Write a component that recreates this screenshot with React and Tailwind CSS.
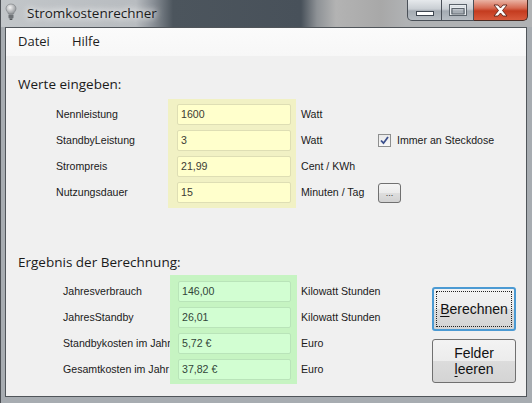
import React from "react";

const inputRows = [
  { label: "Nennleistung", value: "1600", unit: "Watt" },
  { label: "StandbyLeistung", value: "3", unit: "Watt" },
  { label: "Strompreis", value: "21,99", unit: "Cent / KWh" },
  { label: "Nutzungsdauer", value: "15", unit: "Minuten / Tag" },
];

const resultRows = [
  { label: "Jahresverbrauch", value: "146,00", unit: "Kilowatt Stunden" },
  { label: "JahresStandby", value: "26,01", unit: "Kilowatt Stunden" },
  { label: "Standbykosten im Jahr", value: "5,72 €", unit: "Euro" },
  { label: "Gesamtkosten im Jahr", value: "37,82 €", unit: "Euro" },
];

function Bulb() {
  return (
    <svg width="12" height="18" viewBox="0 0 12 18">
      <defs>
        <radialGradient id="bg1" cx="0.4" cy="0.35" r="0.7">
          <stop offset="0" stopColor="#f4f4f4" />
          <stop offset="1" stopColor="#8a8e92" />
        </radialGradient>
      </defs>
      <path d="M6 1 C2.5 1 1 3.5 1 5.5 C1 7.8 3 9 3.5 11 L8.5 11 C9 9 11 7.8 11 5.5 C11 3.5 9.5 1 6 1 Z" fill="url(#bg1)" stroke="#7a7e82" strokeWidth="0.6" />
      <rect x="3.5" y="11.5" width="5" height="4" rx="1" fill="#6d7175" />
      <rect x="4.5" y="15.5" width="3" height="1.5" rx="0.7" fill="#55595d" />
    </svg>
  );
}

function Minimize() {
  return (
    <svg width="18" height="6" viewBox="0 0 18 6">
      <rect x="0.5" y="0.5" width="17" height="4" fill="#ffffff" stroke="#3e4650" strokeWidth="1" />
    </svg>
  );
}

function Maximize() {
  return (
    <svg width="18" height="12" viewBox="0 0 18 12">
      <rect x="0.5" y="0.5" width="17" height="11" fill="none" stroke="#5b636b" strokeWidth="1" />
      <rect x="1.5" y="1.5" width="15" height="9" fill="none" stroke="#e8ecef" strokeWidth="1" />
      <rect x="2.5" y="2.5" width="13" height="2" fill="#e8ecef" />
      <rect x="3" y="4.5" width="12" height="5.5" fill="none" stroke="#5b636b" strokeWidth="1" />
    </svg>
  );
}

function CloseX() {
  return (
    <svg width="17" height="13" viewBox="0 0 17 13">
      <path d="M2 1 L6 1 L8.5 4 L11 1 L15 1 L10.5 6.5 L15 12 L11 12 L8.5 9 L6 12 L2 12 L6.5 6.5 Z" fill="#ffffff" stroke="#5a2318" strokeWidth="0.9" strokeLinejoin="round" />
    </svg>
  );
}

function Check() {
  return (
    <svg width="9" height="9" viewBox="0 0 9 9">
      <path d="M1 4.5 L3.5 7.2 L8 1" fill="none" stroke="#3b4f8c" strokeWidth="1.8" />
    </svg>
  );
}

export default function App() {
  const ui = { fontFamily: '"Open Sans", "Noto Sans", sans-serif' };
  const sans = { fontFamily: '"Liberation Sans", Arial, sans-serif' };
  return (
    <div className="w-[532px] h-[403px] overflow-hidden flex flex-col bg-[#a7acb1] border-l border-[#4c5055]">
      {/* Title bar */}
      <div className="h-[27px] flex items-start shrink-0 bg-[linear-gradient(90deg,#c2c6c9_0px,#b8bcc0_135px,#8a9097_152px,#4c555d_172px,#48515a_300px,#8e9296_316px,#b3b3b3_335px,#a8a8a8_380px,#b0b2b4_405px)]">
        <div className="ml-[4px] mt-[3px]">
          <Bulb />
        </div>
        <div
          className="ml-[10px] mt-[4px] text-[13.5px] leading-[18px] text-[#1c1c1c] [text-shadow:0_0_6px_#ffffff,0_0_10px_#ffffff]"
          style={ui}
        >
          Stromkostenrechner
        </div>
        <div className="ml-auto mr-[4px] flex">
          <div className="w-[35px] h-[21px] flex items-center justify-center pt-[7px] border border-t-0 border-[#4a5058] rounded-bl-[5px] bg-[linear-gradient(180deg,#e6e9ec_0%,#c9ced3_45%,#a4abb2_55%,#b7bdc3_100%)]">
            <Minimize />
          </div>
          <div className="w-[32px] h-[21px] flex items-center justify-center border-b border-r border-[#4a5058] bg-[linear-gradient(180deg,#e6e9ec_0%,#c9ced3_45%,#a4abb2_55%,#b7bdc3_100%)]">
            <Maximize />
          </div>
          <div className="w-[54px] h-[21px] flex items-center justify-center border-b border-r border-[#4a2a22] rounded-br-[5px] bg-[linear-gradient(180deg,#eab3a4_0%,#d66a52_40%,#c43b1f_55%,#d85a3c_100%)]">
            <CloseX />
          </div>
        </div>
      </div>
      {/* Client area */}
      <div className="flex-1 mr-[5px] mb-[6px] ml-[4px] border border-[#50555a] bg-[#f0f0f0] flex flex-col">
        <div className="h-[28px] shrink-0 flex items-center pl-[12px] bg-[linear-gradient(180deg,#fbfbfb_0%,#f7f7f7_100%)] text-[13px] text-[#1e1e1e]" style={ui}>
          <span>Datei</span>
          <span className="ml-[22px]">Hilfe</span>
        </div>

        <div className="flex flex-col text-[10.6px] text-[#1a1a1a]" style={sans}>
          <div className="mt-[19px] ml-[12px] text-[13.5px] leading-[18px] text-[#1a1a1a]" style={ui}>
            Werte eingeben:
          </div>
          <div className="mt-[6px] flex pl-[50px]">
            <div className="w-[112px] pt-[5px] flex flex-col gap-[5px]">
              {inputRows.map((r) => (
                <div key={r.label} className="h-[21px] flex items-center">{r.label}</div>
              ))}
            </div>
            <div className="w-[128px] h-[109px] bg-[#f1f1c4] pt-[5px] pl-[9px] pr-[5px] pb-[5px] flex flex-col gap-[5px]">
              {inputRows.map((r) => (
                <div key={r.label} className="w-[114px] h-[21px] bg-[#ffffcc] border border-[#dedeb4] rounded-[2px] flex items-center pl-[3px] text-[#3c3c34]">
                  {r.value}
                </div>
              ))}
            </div>
            <div className="ml-[5px] w-[77px] pt-[5px] flex flex-col gap-[5px]">
              {inputRows.map((r) => (
                <div key={r.label} className="h-[21px] flex items-center">{r.unit}</div>
              ))}
            </div>
            <div className="pt-[5px] flex flex-col gap-[5px]">
              <div className="h-[21px]" />
              <div className="h-[21px] flex items-center">
                <div className="w-[13px] h-[13px] border border-[#8e8f8f] bg-[linear-gradient(180deg,#e9e9e9_0%,#f8f8f8_100%)] flex items-center justify-center">
                  <Check />
                </div>
                <span className="ml-[6px]">Immer an Steckdose</span>
              </div>
              <div className="h-[21px]" />
              <div className="h-[21px] flex items-center">
                <div className="w-[23px] h-[20px] border border-[#707070] rounded-[3px] bg-[linear-gradient(180deg,#f4f4f4_0%,#ebebeb_50%,#dedede_50%,#d2d2d2_100%)] flex items-end justify-center pb-[4px] text-[9px] leading-none text-[#333]">
                  ...
                </div>
              </div>
            </div>
          </div>

          <div className="mt-[45px] ml-[12px] text-[13.5px] leading-[18px] text-[#1a1a1a]" style={ui}>
            Ergebnis der Berechnung:
          </div>
          <div className="mt-[4px] flex pl-[57px]">
            <div className="w-[107px] pt-[6px] flex flex-col gap-[5px]">
              {resultRows.map((r) => (
                <div key={r.label} className="h-[21px] flex items-center whitespace-nowrap">{r.label}</div>
              ))}
            </div>
            <div className="w-[127px] h-[109px] bg-[#c6f4c2] pt-[6px] pl-[8px] pr-[6px] pb-[4px] flex flex-col gap-[5px]">
              {resultRows.map((r) => (
                <div key={r.label} className="w-[113px] h-[21px] bg-[#d2fed2] border border-[#b9e4b9] rounded-[2px] flex items-center pl-[3px] text-[#33463a]">
                  {r.value}
                </div>
              ))}
            </div>
            <div className="ml-[4px] w-[131px] pt-[6px] flex flex-col gap-[5px]">
              {resultRows.map((r) => (
                <div key={r.label} className="h-[21px] flex items-center">{r.unit}</div>
              ))}
            </div>
            <div className="pt-[12px] flex flex-col gap-[8px] text-[14px] text-[#111]">
              <div className="w-[84px] h-[44px] border-2 border-[#4b9ad3] rounded-[3px] bg-[linear-gradient(180deg,#f3f3f3_0%,#ececec_50%,#dcdcdc_50%,#d4d4d4_100%)] p-[2px]">
                <div className="w-full h-full border border-dotted border-[#222] flex items-center justify-center">
                  <span><span className="underline underline-offset-2">B</span>erechnen</span>
                </div>
              </div>
              <div className="w-[84px] h-[44px] border border-[#707070] rounded-[3px] bg-[linear-gradient(180deg,#f3f3f3_0%,#ececec_50%,#dcdcdc_50%,#d4d4d4_100%)] flex flex-col items-center justify-center leading-[16px]">
                <span>Felder</span>
                <span><span className="underline underline-offset-2">l</span>eeren</span>
              </div>
            </div>
          </div>
        </div>
      </div>
    </div>
  );
}
